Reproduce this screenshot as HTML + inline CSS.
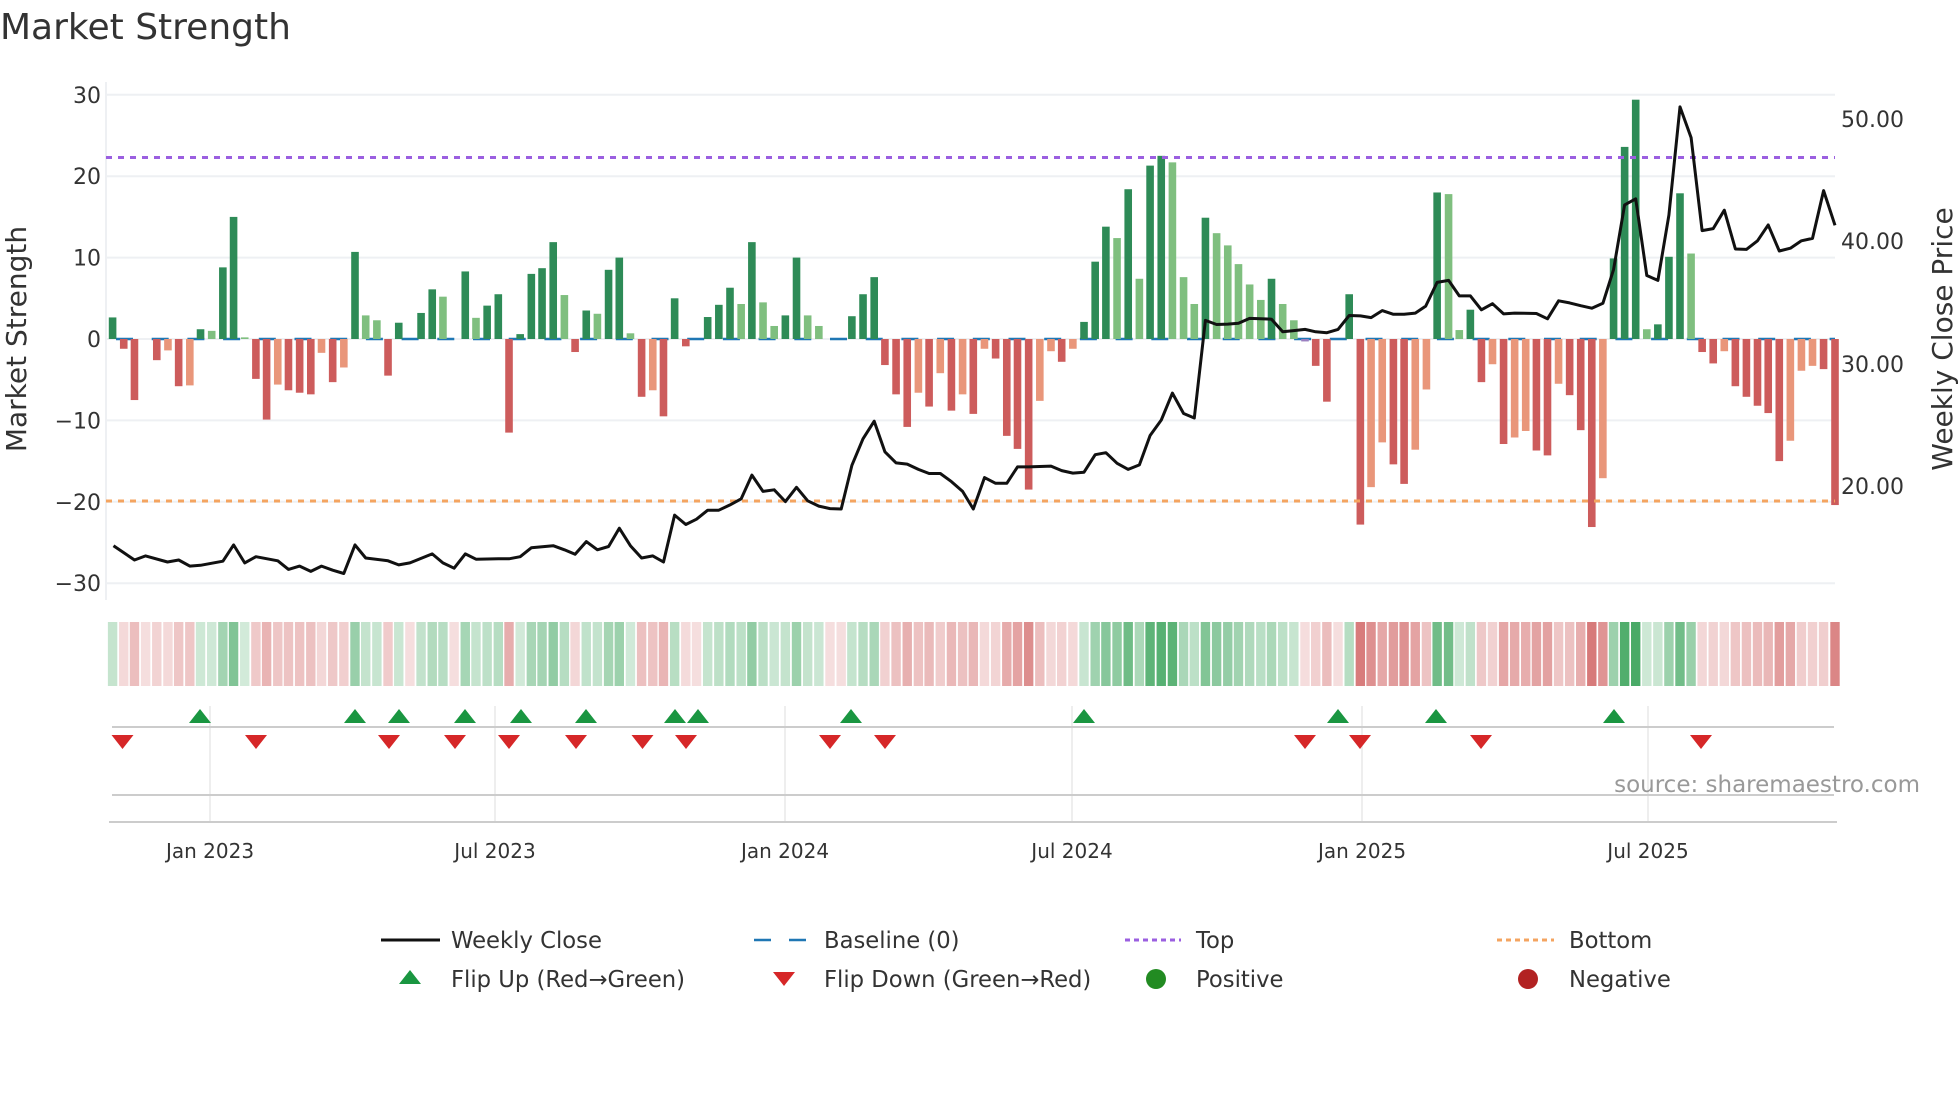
<!DOCTYPE html>
<html><head><meta charset="utf-8"><style>
html,body{margin:0;padding:0;background:#fff;}
svg{display:block;font-family:"DejaVu Sans","Liberation Sans",sans-serif;}
</style></head><body>
<svg id="s" width="1960" height="1102" viewBox="0 0 1960 1102" xmlns="http://www.w3.org/2000/svg">
<text x="0" y="39" font-size="36" fill="#333">Market Strength</text>
<g id="grid" stroke="#eef0f3" stroke-width="2"></g>
<line x1="106" y1="82" x2="106" y2="600" stroke="#eef0f3" stroke-width="2"/>
<g id="vgrid" stroke="#e8e8e8" stroke-width="1.5"></g>
<g id="heat"></g>
<line x1="112" y1="339" x2="1835" y2="339" stroke="#1f77b4" stroke-width="2.5" stroke-dasharray="17 18.7" stroke-dashoffset="-4"/>
<g id="bars"></g>
<line x1="106" y1="157.5" x2="1835" y2="157.5" stroke="#9b5fe0" stroke-width="3" stroke-dasharray="6 6"/>
<line x1="106" y1="501" x2="1835" y2="501" stroke="#f4a460" stroke-width="3" stroke-dasharray="6 6"/>
<polyline id="price" fill="none" stroke="#111" stroke-width="3" stroke-linejoin="round"/>
<g font-size="22" fill="#333" text-anchor="end" id="lt"></g>
<g font-size="22" fill="#333" id="rt">
<text x="1841" y="127">50.00</text><text x="1841" y="249">40.00</text><text x="1841" y="372">30.00</text><text x="1841" y="494">20.00</text>
</g>
<text transform="translate(26,339) rotate(-90)" font-size="28" fill="#333" text-anchor="middle">Market Strength</text>
<text transform="translate(1952,339) rotate(-90)" font-size="28" fill="#333" text-anchor="middle">Weekly Close Price</text>
<line x1="112" y1="727" x2="1834" y2="727" stroke="#ccc" stroke-width="2"/>
<line x1="112" y1="795" x2="1834" y2="795" stroke="#ccc" stroke-width="2"/>
<line x1="109" y1="822" x2="1837" y2="822" stroke="#ccc" stroke-width="2"/>
<g id="tri"></g>
<text x="1920" y="792" font-size="23" fill="#999" text-anchor="end">source: sharemaestro.com</text>
<g font-size="20" fill="#333" text-anchor="middle">
<text x="210" y="858">Jan 2023</text><text x="495" y="858">Jul 2023</text><text x="785" y="858">Jan 2024</text><text x="1072" y="858">Jul 2024</text><text x="1362" y="858">Jan 2025</text><text x="1648" y="858">Jul 2025</text>
</g>
<g font-size="22.7" fill="#333">
<line x1="381" y1="940" x2="440" y2="940" stroke="#111" stroke-width="3"/>
<text x="451" y="948">Weekly Close</text>
<line x1="754" y1="940" x2="806" y2="940" stroke="#1f77b4" stroke-width="2.5" stroke-dasharray="17 18"/>
<text x="824" y="948">Baseline (0)</text>
<line x1="1125" y1="940" x2="1181" y2="940" stroke="#9b5fe0" stroke-width="3" stroke-dasharray="5 4"/>
<text x="1196" y="948">Top</text>
<line x1="1497" y1="940" x2="1554" y2="940" stroke="#f4a460" stroke-width="3" stroke-dasharray="5 4"/>
<text x="1569" y="948">Bottom</text>
<polygon points="399,984 421,984 410,970" fill="#1a9641"/>
<text x="451" y="987">Flip Up (Red→Green)</text>
<polygon points="773,972 795,972 784,986" fill="#d62728"/>
<text x="824" y="987">Flip Down (Green→Red)</text>
<circle cx="1156" cy="979" r="10" fill="#228b22"/>
<text x="1196" y="987">Positive</text>
<circle cx="1528" cy="979" r="10" fill="#b22222"/>
<text x="1569" y="987">Negative</text>
</g>
</svg>
<script>
var NS="http://www.w3.org/2000/svg";
function el(t,a,p){var e=document.createElementNS(NS,t);for(var k in a)e.setAttribute(k,a[k]);document.getElementById(p).appendChild(e);return e;}
[30,20,10,0,-10,-20,-30].forEach(function(v){var y=339-v*8.14;el("line",{x1:106,y1:y,x2:1835,y2:y},"grid");
var t=el("text",{x:101,y:y+8},"lt");t.textContent=(v<0?"\u2212"+(-v):v);});
[210,495,785,1072,1362,1648].forEach(function(x){el("line",{x1:x,y1:706,x2:x,y2:822},"vgrid");});
var z1="73 2.65 g,98 -1.2 r,122 -7.5 r,147 0 n,172 -2.6 r,197 -1.4 o,221 -5.8 r,246 -5.7 o,270 1.2 g,295 1 l,320 8.8 g,344 15 g,369 0.2 l,394 -4.9 r,418 -9.9 r,443 -5.6 o,467 -6.3 r,492 -6.6 r,517 -6.8 r,541 -1.7 o,566 -5.3 r,591 -3.5 o,616 10.7 g,640 2.9 l,665 2.3 l,690 -4.5 r,714 2 g,739 0 n,764 3.2 g,789 6.1 g,813 5.2 l,838 0 n,863 8.3 g,887 2.6 l,912 4.1 g,937 5.5 g,961 -11.5 r,986 0.6 g,1011 8 g,1035 8.7 g,1060 11.9 g,1085 5.4 l,1109 -1.6 r,1134 3.5 g,1159 3.1 l,1184 8.5 g,1208 10 g,1233 0.7 l,1258 -7.1 r,1283 -6.3 o,1307 -9.5 r,1332 5 g,1357 -0.9 r,1381 0 n,1406 2.7 g,1431 4.2 g,1456 6.3 g,1481 4.3 l,1505 11.9 g,1530 4.5 l,1555 1.6 l";
var z2="12 2.9 g,37 10 g,62 2.9 l,87 1.6 l,112 0 n,137 0 n,161 2.8 g,186 5.5 g,211 7.6 g,235 -3.2 r,260 -6.8 r,285 -10.8 r,310 -6.6 o,334 -8.3 r,359 -4.2 o,384 -8.8 r,409 -6.8 o,433 -9.2 r,458 -1.2 o,483 -2.4 r,508 -11.9 r,532 -13.5 r,557 -18.5 r,582 -7.6 o,607 -1.5 o,631 -2.8 r,656 -1.2 o,681 2.1 g,706 9.5 g,730 13.8 g,755 12.4 l,780 18.4 g,805 7.4 l,829 21.3 g,854 22.5 g,879 21.7 l,904 7.6 l,928 4.3 l,953 14.9 g,978 13 l,1003 11.5 l,1027 9.2 l,1052 6.7 l,1077 4.8 l,1101 7.4 g,1126 4.3 l,1151 2.3 l,1176 -0.3 p,1200 -3.3 r,1225 -7.7 r,1250 0 n,1275 5.5 g,1300 -22.8 r,1324 -18.2 o,1349 -12.7 o,1374 -15.4 r,1398 -17.8 r,1423 -13.6 o,1448 -6.2 o";
var z3="104 18 g,136 17.8 l,166 1.1 l,197 3.6 g,228 -5.3 r,259 -3.1 o,290 -12.9 r,321 -12.1 o,352 -11.3 o,382 -13.7 r,413 -14.3 r,444 -5.5 o,475 -6.9 r,506 -11.2 r,537 -23.1 r,568 -17.1 o,598 9.9 g,629 23.6 g,660 29.4 g,691 1.2 l,722 1.8 g,753 10.1 g,784 17.9 g,815 10.5 l,846 -1.6 r,877 -3 r,908 -1.5 o,939 -5.8 r,970 -7.1 r,1001 -8.2 r,1031 -9.1 r,1062 -15 r,1093 -12.5 o,1124 -3.9 o,1155 -3.3 o,1186 -3.7 r,1218 -20.4 r";
var col={g:"#2e8b57",l:"#7fbf7f",r:"#cd5c5c",o:"#e9967a",p:"#9b7fc0",n:"none"};
function bars(s,off,f){s.split(",").forEach(function(it){var a=it.split(" ");var x=off+(+a[0])/f,v=+a[1],c=a[2];
 var y0=339,y1=339-v*8.14;
 if(c!="n"&&Math.abs(v)>0.05)el("rect",{x:x-3.8,y:Math.min(y0,y1),width:7.6,height:Math.abs(y1-y0),fill:col[c]},"bars");
 var m=Math.min(1,Math.abs(v)/25),fc,op;
 if(v>0){fc="#3aa35a";op=0.22+0.7*m;}else{fc="#c94a4a";op=0.18+0.6*m;}
 el("rect",{x:x-4.7,y:622,width:9.4,height:64,fill:fc,"fill-opacity":op},"heat");
});}
bars(z1,80,2.24);bars(z2,780,2.24);bars(z3,1400,2.8);
var p1="75,1190 122,1225 147,1215 196,1230 221,1225 246,1240 270,1238 320,1228 344,1188 369,1232 394,1217 443,1227 467,1248 492,1240 517,1253 541,1240 566,1250 591,1258 616,1188 640,1220 690,1227 714,1237 739,1232 789,1210 813,1232 838,1245 863,1210 887,1223 937,1222 961,1222 986,1217 1011,1195 1060,1190 1085,1200 1109,1211 1134,1180 1159,1200 1184,1192 1208,1147 1233,1190 1258,1220 1283,1215 1307,1230 1332,1115 1357,1138 1381,1125 1406,1103 1431,1103 1456,1090 1481,1075 1505,1017 1530,1057 1555,1053";
var p2="12,1082 37,1047 62,1080 87,1093 112,1099 137,1100 161,993 186,928 211,885 235,960 260,987 285,990 310,1003 334,1013 359,1013 384,1033 409,1057 433,1100 458,1023 483,1037 508,1037 532,997 557,997 582,996 607,995 631,1006 656,1012 681,1010 706,967 730,962 755,988 780,1003 805,992 829,920 854,882 879,816 904,866 928,877 953,638 978,648 1003,647 1027,645 1052,633 1077,634 1101,635 1126,666 1151,663 1176,660 1200,666 1225,668 1250,660 1275,626 1300,627 1324,631 1349,614 1374,623 1398,623 1423,620";
var p3="72,603 104,545 136,540 166,578 197,578 228,612 259,597 290,622 321,620 382,621 413,634 444,590 475,595 506,602 537,608 568,596 598,513 629,355 660,340 691,528 722,540 753,380 784,115 815,190 846,418 877,413 908,368 939,463 970,464 1001,443 1031,404 1062,468 1093,461 1124,443 1155,437 1186,320 1218,405";
var pts=[];
function addp(s,ox,f){s.split(" ").forEach(function(q){var a=q.split(",");pts.push((ox+(+a[0])/f).toFixed(1)+","+(60+(+a[1])/2.45).toFixed(1));});}
addp(p1,80,2.24);addp(p2,780,2.24);addp(p3,1400,2.8);
document.getElementById("price").setAttribute("points",pts.join(" "));
[200,355,399,465,521,586,675,698,851,1084,1338,1436,1614].forEach(function(x){el("polygon",{points:(x-11)+",723 "+(x+11)+",723 "+x+",709",fill:"#1a9641"},"tri");});
[122.5,256,389,455,509,576,642.5,686,830,885,1305,1360,1481,1701].forEach(function(x){el("polygon",{points:(x-11)+",735 "+(x+11)+",735 "+x+",749",fill:"#d62728"},"tri");});
</script>
</body></html>
